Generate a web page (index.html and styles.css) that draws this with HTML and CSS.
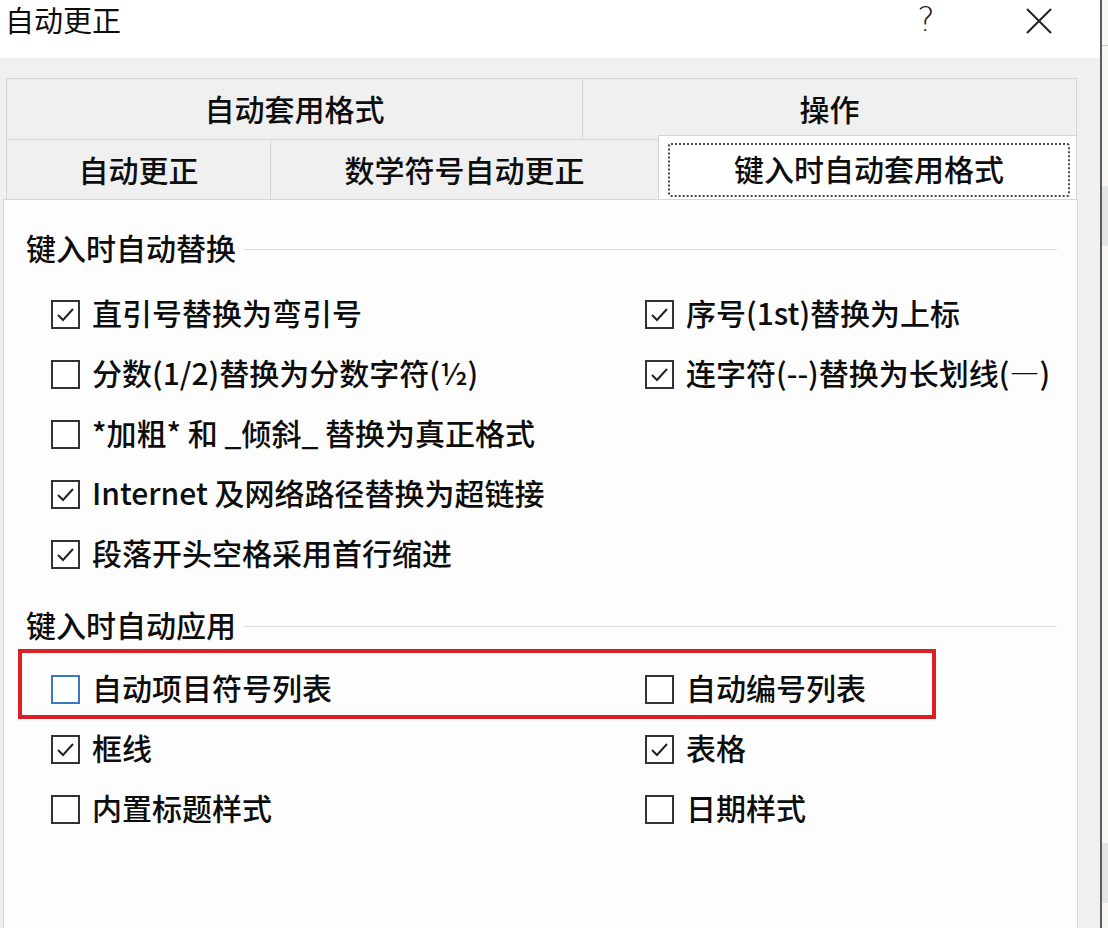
FILE: index.html
```html
<!DOCTYPE html>
<html lang="zh-CN">
<head>
  <meta charset="UTF-8" />
  <title>自动更正</title>
  <link rel="stylesheet" href="styles.css">
</head>
<body>
  <div class="screen">
    <div class="dialog">
      <div class="titlebar">
        <span class="title">自动更正</span>
        <span class="help">?</span>
        <span class="close">
          <svg width="28" height="28" viewBox="0 0 28 28"><path d="M2 2 L26 26 M26 2 L2 26" stroke="#222" stroke-width="2" fill="none"/></svg>
        </span>
      </div>

      <div class="dialog-body">
        <div class="tab-row back">
          <div class="tab">自动套用格式</div>
          <div class="tab">操作</div>
        </div>
        <div class="tab-row front">
          <div class="tab">自动更正</div>
          <div class="tab">数学符号自动更正</div>
          <div class="tab selected"><span class="focus">键入时自动套用格式</span></div>
        </div>

        <div class="panel">
          <div class="group-title"><span class="txt">键入时自动替换</span><i class="rule"></i></div>
          <div class="rows first">
            <div class="row">
              <label class="opt"><span class="box on"></span><span class="txt">直引号替换为弯引号</span></label>
              <label class="opt"><span class="box on"></span><span class="txt">序号(1st)替换为上标</span></label>
            </div>
            <div class="row">
              <label class="opt"><span class="box"></span><span class="txt">分数(1/2)替换为分数字符(½)</span></label>
              <label class="opt"><span class="box on"></span><span class="txt">连字符(--)替换为长划线(—)</span></label>
            </div>
            <div class="row">
              <label class="opt"><span class="box"></span><span class="txt">*加粗* 和 _倾斜_ 替换为真正格式</span></label>
              <div></div>
            </div>
            <div class="row">
              <label class="opt"><span class="box on"></span><span class="txt">Internet 及网络路径替换为超链接</span></label>
              <div></div>
            </div>
            <div class="row">
              <label class="opt"><span class="box on"></span><span class="txt">段落开头空格采用首行缩进</span></label>
              <div></div>
            </div>
          </div>

          <div class="group-title second"><span class="txt">键入时自动应用</span><i class="rule"></i></div>
          <div class="rows">
            <div class="row marked">
              <label class="opt"><span class="box focused"></span><span class="txt">自动项目符号列表</span></label>
              <label class="opt"><span class="box"></span><span class="txt">自动编号列表</span></label>
            </div>
            <div class="row">
              <label class="opt"><span class="box on"></span><span class="txt">框线</span></label>
              <label class="opt"><span class="box on"></span><span class="txt">表格</span></label>
            </div>
            <div class="row">
              <label class="opt"><span class="box"></span><span class="txt">内置标题样式</span></label>
              <label class="opt"><span class="box"></span><span class="txt">日期样式</span></label>
            </div>
          </div>
        </div>
      </div>
    </div>
    <div class="outside">
      <div class="band top"></div>
      <div class="band mid"></div>
      <div class="band low"></div>
    </div>
  </div>
</body>
</html>
```

FILE: styles.css
```css
body {
  margin: 0;
  overflow: hidden;
  font-family: "Noto Sans CJK SC", "Noto Sans", sans-serif;
  font-weight: 500;
  color: #0d0d0d;
  background: #f8f7f3;
}
.screen {
  display: flex;
  width: 1108px;
  height: 928px;
}
.dialog {
  width: 1100px;
  height: 928px;
  border-right: 2px solid #5b5b60;
  display: flex;
  flex-direction: column;
  background: #f0f0f0;
}
.titlebar {
  height: 58px;
  background: #fff;
  display: flex;
  align-items: flex-start;
  padding-left: 5px;
}
.title {
  font-size: 29px;
  font-weight: 400;
  line-height: 38px;
}
.help {
  margin-left: auto;
  width: 30px;
  text-align: center;
  font-family: "DejaVu Sans", sans-serif;
  font-weight: 300;
  font-size: 33px;
  line-height: 40px;
  color: #222;
}
.close {
  margin: 7px 47px 0 84px;
  height: 28px;
}
.dialog-body {
  flex: 1;
  padding: 20px 22px 0 3px;
  display: flex;
  flex-direction: column;
}
.tab-row {
  display: grid;
  height: 60px;
  margin-left: 3px;
  margin-right: 1px;
}
.tab-row.back {
  grid-template-columns: 576px 1fr;
  border-top: 1px solid #d6d6d6;
}
.tab-row.front {
  grid-template-columns: 264px 388px 1fr;
  border-top: 1px solid #d6d6d6;
  height: 59px;
}
.tab {
  display: flex;
  align-items: center;
  justify-content: center;
  font-size: 30px;
  padding-bottom: 2px;
  border-left: 1px solid #d6d6d6;
  background: #f0f0f0;
}
.tab-row.back .tab:last-child {
  border-right: 1px solid #d6d6d6;
}
.tab.selected {
  background: #fff;
  margin-top: -5px;
  border: 1px solid #d6d6d6;
  border-bottom: none;
  padding: 7px 6px 2px 9px;
  position: relative;
  z-index: 1;
}
.focus {
  flex: 1;
  align-self: stretch;
  display: flex;
  align-items: center;
  justify-content: center;
  border: 2px dotted #4a4a4a;
  border-radius: 3px;
  padding-bottom: 5px;
}
.panel {
  flex: 1;
  background: #fdfdfe;
  border: 1px solid #d6d6d6;
  border-bottom: none;
  padding: 29px 20px 0 22px;
}
.group-title {
  display: flex;
  align-items: center;
  height: 40px;
  font-size: 30px;
}
.group-title.second {
  margin-top: 22px;
}
.rule {
  flex: 1;
  height: 1px;
  background: #dcdcdc;
  margin-left: 8px;
}
.txt {
  padding-bottom: 4px;
}
.rows {
  margin: 13px 0 0 24px;
}
.rows.first {
  margin-top: 15px;
}
.row {
  display: grid;
  grid-template-columns: 594px 1fr;
  height: 60px;
}
.opt {
  display: flex;
  align-items: center;
  font-size: 30px;
  white-space: nowrap;
}
.box {
  width: 29px;
  height: 29px;
  box-sizing: border-box;
  border: 2px solid #333;
  margin: 0 12px 0 1px;
  flex: none;
  background: #fff;
}
.box.on {
  background: #fff url("data:image/svg+xml;utf8,<svg xmlns='http://www.w3.org/2000/svg' width='25' height='25' viewBox='0 0 25 25'><polyline points='5,13 10,18 20,7' fill='none' stroke='%23222' stroke-width='2'/></svg>") no-repeat center;
}
.box.focused {
  border-color: #3a78c4;
}
.row.marked {
  position: relative;
}
.row.marked::after {
  content: "";
  position: absolute;
  left: -32px;
  top: -10px;
  width: 918px;
  height: 70px;
  box-sizing: border-box;
  border: 4px solid #dc1f27;
  pointer-events: none;
}
.outside {
  flex: 1;
  display: flex;
  flex-direction: column;
}
.band.top {
  height: 45px;
  border-bottom: 1px solid #c9c9c9;
}
.band.mid {
  height: 60px;
  margin-top: 140px;
  background: #e4e4e4;
}
.band.low {
  height: 60px;
  margin-top: 597px;
  background: #e4e4e4;
}
```
